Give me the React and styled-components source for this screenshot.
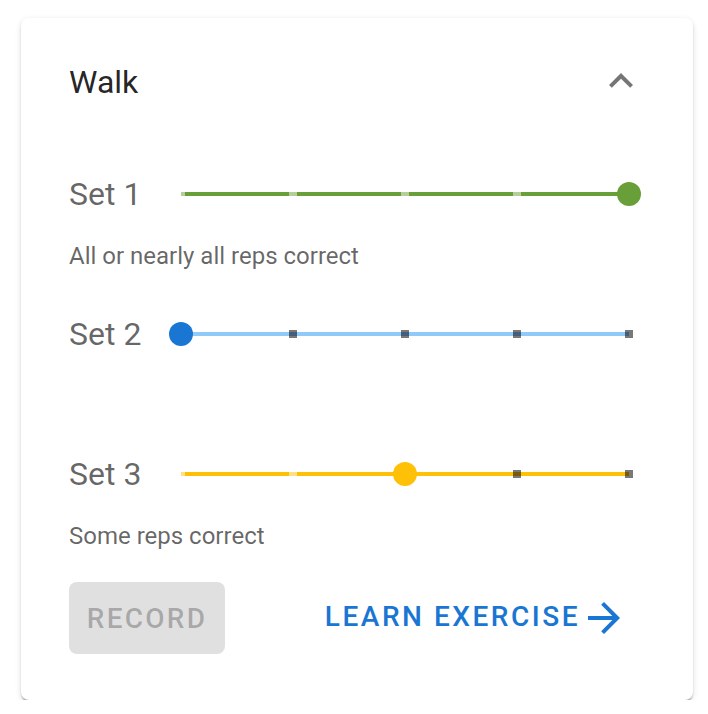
import React from "react";
import styled, { createGlobalStyle } from "styled-components";

const Global = createGlobalStyle`
  html, body { margin: 0; padding: 0; background: #ffffff; }
  body { font-family: Roboto, "Noto Sans", "Liberation Sans", sans-serif; }
  * { box-sizing: border-box; }
`;

const Card = styled.div`
  width: 672px;
  margin: 18px 0 0 21px;
  padding: 39px 48px 46px 48px;
  background: #fff;
  border-radius: 8px;
  box-shadow: 0 4px 2px -2px rgba(0,0,0,0.26), 0 2px 2px 0 rgba(0,0,0,0.14), 0 2px 6px 0 rgba(0,0,0,0.12);
  display: flex;
  flex-direction: column;
`;

const Header = styled.div`
  display: flex;
  justify-content: space-between;
  align-items: center;
  height: 48px;
`;

const Title = styled.h2`
  margin: 0;
  font-size: 32px;
  font-weight: 400;
  line-height: 48px;
  padding-top: 2px;
  color: rgba(0,0,0,0.87);
`;

const IconButton = styled.button`
  width: 48px;
  height: 48px;
  padding: 0;
  border: none;
  background: transparent;
  display: flex;
  align-items: center;
  justify-content: center;
  color: rgba(0,0,0,0.54);
  svg { display: block; }
`;

const Sets = styled.div`
  display: flex;
  flex-direction: column;
  gap: 36px;
  margin-top: 65px;
`;

const SetBlock = styled.div`
  display: flex;
  flex-direction: column;
`;

const SetRow = styled.div`
  display: flex;
  align-items: center;
  height: 48px;
`;

const SetLabel = styled.span`
  width: 112px;
  font-size: 32px;
  line-height: 48px;
  color: rgba(0,0,0,0.6);
`;

const Helper = styled.div`
  margin-top: 20px;
  height: 36px;
  font-size: 24px;
  line-height: 36px;
  color: rgba(0,0,0,0.6);
`;

const SliderRoot = styled.div`
  position: relative;
  width: 448px;
  height: 48px;
`;

const Rail = styled.div`
  position: absolute;
  left: 0;
  right: 0;
  top: 22px;
  height: 4px;
  background: ${(p) => p.$color};
`;

const Fill = styled.div`
  position: absolute;
  left: 0;
  top: 22px;
  height: 4px;
  background: ${(p) => p.$color};
`;

const Mark = styled.span`
  position: absolute;
  top: 20px;
  width: 8px;
  height: 8px;
  transform: translateX(-50%);
  background: ${(p) => (p.$active ? "rgba(255,255,255,0.5)" : "rgba(0,0,0,0.53)")};
`;

const Thumb = styled.span`
  position: absolute;
  top: 12px;
  width: 24px;
  height: 24px;
  border-radius: 50%;
  transform: translateX(-50%);
  background: ${(p) => p.$color};
`;

const Actions = styled.div`
  display: flex;
  justify-content: space-between;
  align-items: center;
  margin-top: 28px;
`;

const RecordButton = styled.button`
  width: 156px;
  height: 72px;
  border: none;
  border-radius: 8px;
  background: #e0e0e0;
  color: rgba(0,0,0,0.26);
  font-family: Roboto, "Noto Sans", sans-serif;
  font-weight: 500;
  font-size: 28px;
  letter-spacing: 0.08em;
  padding: 0;
`;

const LinkButton = styled.button`
  display: inline-flex;
  align-items: center;
  gap: 8px;
  height: 72px;
  padding: 0 25px 0 0;
  border: none;
  background: transparent;
  color: #1976d2;
  font-family: Roboto, "Noto Sans", sans-serif;
  font-weight: 500;
  font-size: 28px;
  letter-spacing: 0.09em;
  svg { display: block; }
`;

const LinkText = styled.span`
  margin-bottom: 4px;
`;

function Slider({ value, max, steps, main, rail }) {
  const marks = [];
  for (let i = 0; i <= steps; i++) marks.push(i);
  const pct = (value / max) * 100;
  return (
    <SliderRoot>
      <Rail $color={rail} />
      <Fill $color={main} style={{ width: `${pct}%` }} />
      {marks.map((m) => {
        const mp = (m / steps) * 100;
        return <Mark key={m} $active={mp <= pct} style={{ left: `${mp}%` }} />;
      })}
      <Thumb $color={main} style={{ left: `${pct}%` }} />
    </SliderRoot>
  );
}

const sets = [
  { label: "Set 1", value: 4, main: "#689f38", rail: "#b5d09c", helper: "All or nearly all reps correct" },
  { label: "Set 2", value: 0, main: "#1976d2", rail: "#90caf9", helper: "" },
  { label: "Set 3", value: 2, main: "#ffc107", rail: "#ffc107", helper: "Some reps correct" },
];

export default function App() {
  return (
    <>
      <Global />
      <Card>
        <Header>
          <Title>Walk</Title>
          <IconButton aria-label="collapse">
            <svg width="48" height="48" viewBox="0 0 24 24" fill="currentColor">
              <path d="M12 8l-6 6 1.41 1.41L12 10.83l4.59 4.58L18 14z" />
            </svg>
          </IconButton>
        </Header>
        <Sets>
          {sets.map((s) => (
            <SetBlock key={s.label}>
              <SetRow>
                <SetLabel>{s.label}</SetLabel>
                <Slider value={s.value} max={4} steps={4} main={s.main} rail={s.rail} />
              </SetRow>
              <Helper>{s.helper}</Helper>
            </SetBlock>
          ))}
        </Sets>
        <Actions>
          <RecordButton disabled>RECORD</RecordButton>
          <LinkButton>
            <LinkText>LEARN EXERCISE</LinkText>
            <svg width="32" height="32" viewBox="4 4 16 16" fill="currentColor">
              <path d="M12 4l-1.41 1.41L16.17 11H4v2h12.17l-5.58 5.59L12 20l8-8z" />
            </svg>
          </LinkButton>
        </Actions>
      </Card>
    </>
  );
}
